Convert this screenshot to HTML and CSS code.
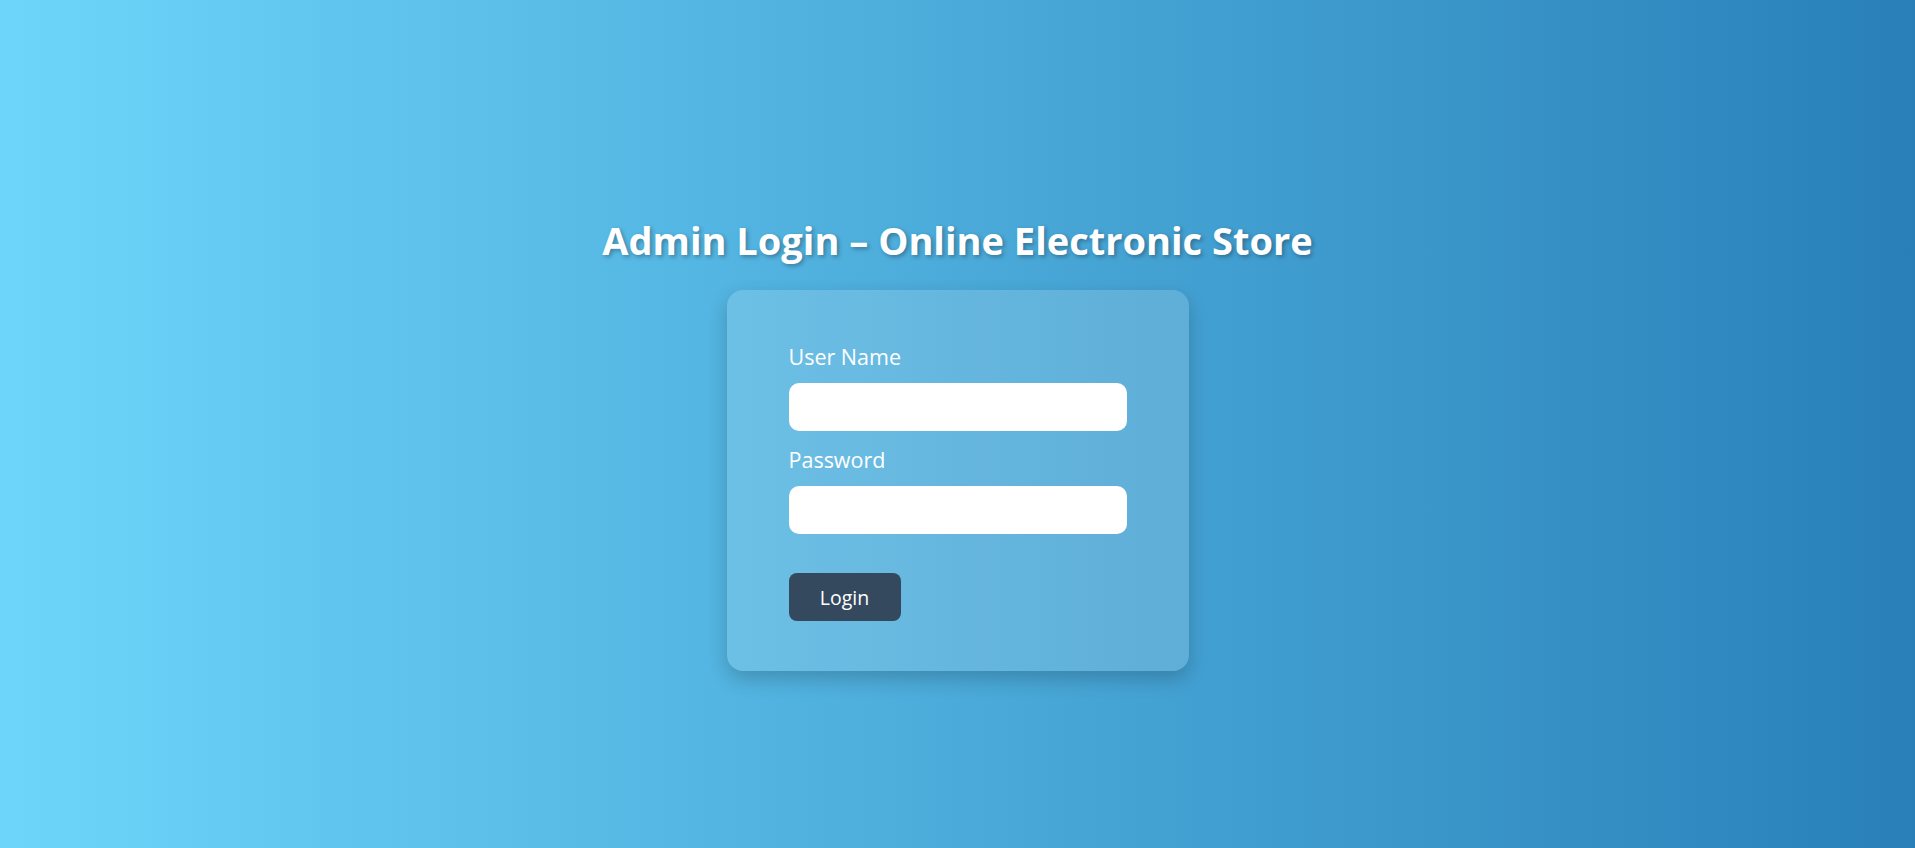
FILE: index.html
```html
<!DOCTYPE html>
<html lang="en">
<head>
<meta charset="utf-8">
<title>Admin Login – Online Electronic Store</title>
<link rel="stylesheet" href="styles.css">
</head>
<body>
<main class="page">
  <h1 class="title">Admin Login – Online Electronic Store</h1>
  <form class="card" onsubmit="return false;">
    <label class="label" for="user">User Name</label>
    <input class="field" id="user" type="text">
    <label class="label label-second" for="pass">Password</label>
    <input class="field" id="pass" type="password">
    <button class="btn" type="submit">Login</button>
  </form>
</main>
</body>
</html>
```

FILE: styles.css
```css
* { box-sizing: border-box; }
html, body { margin: 0; padding: 0; height: 100%; }
body {
  font-family: "Open Sans", "Noto Sans", sans-serif;
  background: linear-gradient(to right, #6dd5fa, #2980b9);
  color: #fff;
  overflow: hidden;
}
.page {
  display: flex;
  flex-direction: column;
  align-items: center;
  padding-top: 218px;
  height: 100%;
}
.title {
  margin: 0 0 28px 0;
  font-size: 38px;
  line-height: 44px;
  font-weight: 700;
  color: #fff;
  text-shadow: 2px 2px 4px rgba(0, 0, 0, 0.3);
  white-space: nowrap;
}
.card {
  width: 462px;
  padding: 53px 62px 50px;
  background: rgba(255, 255, 255, 0.15);
  border-radius: 16px;
  box-shadow: 0 8px 20px rgba(0, 0, 0, 0.2);
  display: flex;
  flex-direction: column;
  align-items: flex-start;
}
.label {
  font-size: 21.5px;
  line-height: 28px;
  color: #fff;
  margin-bottom: 12px;
}
.label-second { margin-top: 15px; }
.field {
  width: 338px;
  height: 48px;
  border: none;
  border-radius: 10px;
  background: #fff;
  padding: 0 12px;
  font-size: 18px;
  font-family: inherit;
  outline: none;
}
.btn {
  margin-top: 39px;
  width: 112px;
  height: 48px;
  border: none;
  border-radius: 8px;
  background: #34495e;
  color: #fff;
  font-family: inherit;
  font-size: 19.5px;
  cursor: pointer;
}
```
